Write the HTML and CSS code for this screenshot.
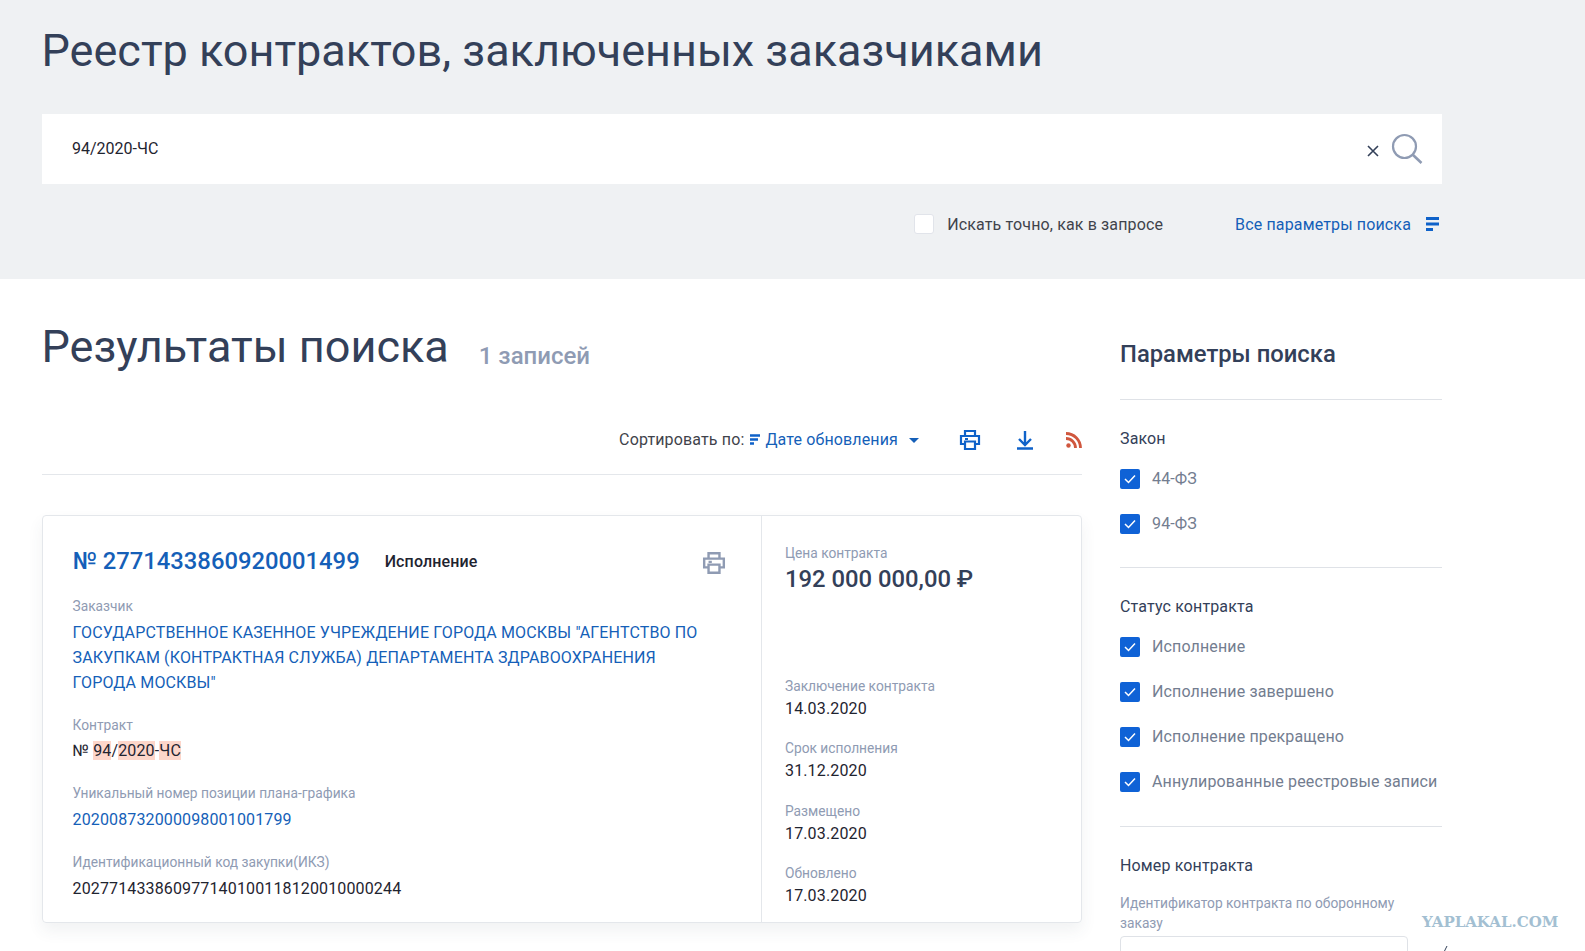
FILE: index.html
```html
<!DOCTYPE html>
<html lang="ru">
<head>
    <meta charset="UTF-8">
    <meta name="viewport" content="width=device-width, initial-scale=1.0">
    <title>Реестр контрактов</title>
    <link rel="stylesheet" href="styles.css">
</head>
<body>
    <!-- Search header -->
    <section class="hero">
        <h1 class="hero-title">Реестр контрактов, заключенных заказчиками</h1>
        <div class="search-box">
            <span class="search-value">94/2020-ЧС</span>
            <svg class="icon-clear" width="14" height="14" viewBox="0 0 14 14"><path d="M2 2l10 10M12 2L2 12" stroke="#334059" stroke-width="1.6" fill="none"/></svg>
            <svg class="icon-search" width="32" height="32" viewBox="0 0 32 32"><circle cx="13.5" cy="13.5" r="11.5" stroke="#8f9bb3" stroke-width="2.2" fill="none"/><path d="M21.8 21.8l8.7 8.2" stroke="#8f9bb3" stroke-width="2.6" fill="none"/></svg>
        </div>
        <div class="search-options">
            <span class="check-empty"></span>
            <span class="exact-label">Искать точно, как в запросе</span>
            <a class="all-params">Все параметры поиска</a>
            <svg width="13" height="14" viewBox="0 0 13 14"><path d="M0 1.500h13M0 7h13M0 12.500h7" stroke="#0f62c9" stroke-width="2.800" fill="none"/></svg>
        </div>
    </section>

    <div class="content">
        <main class="results">
            <div class="results-head">
                <h2 class="results-title">Результаты поиска</h2>
                <span class="results-count">1 записей</span>
            </div>

            <div class="toolbar">
                <span class="sort-label">Сортировать по:</span>
                <svg class="icon-sort" width="10" height="11" viewBox="0 0 10 11"><path d="M0 1.500h10M0 5.500h8M0 9.500h4" stroke="#0f62c9" stroke-width="2.600" fill="none"/></svg>
                <a class="sort-value">Дате обновления</a>
                <span class="caret"></span>
                <svg class="tool-print" width="22" height="22" viewBox="0 0 22 22"><path d="M6 6V2h10v4M6 15H2V7h18v8h-4M6 12.500h10V20H6zM6 10h3" stroke="#0f62c9" stroke-width="2.200" fill="none"/></svg>
                <svg class="tool-load" width="18" height="20" viewBox="0 0 18 20"><path d="M9 1v13M3 9l6 6 6-6M1 18.500h16" stroke="#0f62c9" stroke-width="2.400" fill="none"/></svg>
                <svg class="tool-rss" width="16" height="16" viewBox="0 0 16 16"><circle cx="2.500" cy="13.500" r="2.200" fill="#d0573e"/><path d="M0 6.500a9.500 9.500 0 0 1 9.500 9.500M0 1.500a14.500 14.500 0 0 1 14.500 14.500" stroke="#d0573e" stroke-width="2.800" fill="none"/></svg>
            </div>

            <article class="card">
                <div class="card-main">
                    <div class="card-top">
                        <a class="card-number">№ 2771433860920001499</a>
                        <span class="card-status">Исполнение</span>
                        <svg class="card-print" width="24" height="24" viewBox="0 0 22 22"><path d="M6 6V2h10v4M6 15H2V7h18v8h-4M6 12.500h10V20H6zM6 10h3" stroke="#8f9bb3" stroke-width="2.200" fill="none"/></svg>
                    </div>
                    <div class="field field-first">
                        <div class="field-label">Заказчик</div>
                        <a class="field-link">ГОСУДАРСТВЕННОЕ КАЗЕННОЕ УЧРЕЖДЕНИЕ ГОРОДА МОСКВЫ "АГЕНТСТВО ПО ЗАКУПКАМ (КОНТРАКТНАЯ СЛУЖБА) ДЕПАРТАМЕНТА ЗДРАВООХРАНЕНИЯ ГОРОДА МОСКВЫ"</a>
                    </div>
                    <div class="field">
                        <div class="field-label">Контракт</div>
                        <div class="field-value">№ <mark>94</mark>/<mark>2020</mark>-<mark>ЧС</mark></div>
                    </div>
                    <div class="field">
                        <div class="field-label">Уникальный номер позиции плана-графика</div>
                        <a class="field-link">202008732000098001001799</a>
                    </div>
                    <div class="field">
                        <div class="field-label">Идентификационный код закупки(ИКЗ)</div>
                        <div class="field-value field-value-last">202771433860977140100118120010000244</div>
                    </div>
                </div>
                <div class="card-side">
                    <div class="price-block">
                        <div class="field-label">Цена контракта</div>
                        <div class="price">192 000 000,00 ₽</div>
                    </div>
                    <div class="date-list">
                        <div class="date-item">
                            <div class="field-label">Заключение контракта</div>
                            <div class="date-value">14.03.2020</div>
                        </div>
                        <div class="date-item">
                            <div class="field-label">Срок исполнения</div>
                            <div class="date-value">31.12.2020</div>
                        </div>
                        <div class="date-item">
                            <div class="field-label">Размещено</div>
                            <div class="date-value">17.03.2020</div>
                        </div>
                        <div class="date-item">
                            <div class="field-label">Обновлено</div>
                            <div class="date-value">17.03.2020</div>
                        </div>
                    </div>
                </div>
            </article>
        </main>

        <aside class="sidebar">
            <h3 class="sidebar-title">Параметры поиска</h3>

            <div class="filter-group">
                <div class="filter-name">Закон</div>
                <div class="check-row"><span class="check-on"><svg width="14" height="12" viewBox="0 0 14 12"><path d="M2 6l3.500 3.500L12 2.500" stroke="#fff" stroke-width="1.500" fill="none"/></svg></span>44-ФЗ</div>
                <div class="check-row"><span class="check-on"><svg width="14" height="12" viewBox="0 0 14 12"><path d="M2 6l3.500 3.500L12 2.500" stroke="#fff" stroke-width="1.500" fill="none"/></svg></span>94-ФЗ</div>
            </div>

            <div class="filter-group filter-status">
                <div class="filter-name">Статус контракта</div>
                <div class="check-row"><span class="check-on"><svg width="14" height="12" viewBox="0 0 14 12"><path d="M2 6l3.500 3.500L12 2.500" stroke="#fff" stroke-width="1.500" fill="none"/></svg></span>Исполнение</div>
                <div class="check-row"><span class="check-on"><svg width="14" height="12" viewBox="0 0 14 12"><path d="M2 6l3.500 3.500L12 2.500" stroke="#fff" stroke-width="1.500" fill="none"/></svg></span>Исполнение завершено</div>
                <div class="check-row"><span class="check-on"><svg width="14" height="12" viewBox="0 0 14 12"><path d="M2 6l3.500 3.500L12 2.500" stroke="#fff" stroke-width="1.500" fill="none"/></svg></span>Исполнение прекращено</div>
                <div class="check-row"><span class="check-on"><svg width="14" height="12" viewBox="0 0 14 12"><path d="M2 6l3.500 3.500L12 2.500" stroke="#fff" stroke-width="1.500" fill="none"/></svg></span>Аннулированные реестровые записи</div>
            </div>

            <div class="filter-group filter-last">
                <div class="filter-name">Номер контракта</div>
                <div class="filter-hint">Идентификатор контракта по оборонному заказу</div>
                <div class="filter-input"></div>
            </div>
        </aside>
    </div>

    <div class="watermark">YAPLAKAL.COM</div>
    <svg class="cut-mark" width="5" height="6" viewBox="0 0 5 6"><path d="M4 0L1 6" stroke="#334059" stroke-width="1" fill="none"/></svg>
</body>
</html>
```

FILE: styles.css
```css
html, body {
    height: 951px;
    overflow: hidden;
}

body {
    margin: 0;
    font-family: Roboto, "Liberation Sans", sans-serif;
    font-size: 16px;
    letter-spacing: 0.14px;
    color: #334059;
    background-color: #fff;
    position: relative;
}

a {
    color: #155fb8;
}

/* Search header */
.hero {
    height: 279px;
    box-sizing: border-box;
    padding: 19px 143px 0 42px;
    background-color: #eff1f3;
}

.hero-title {
    margin: 0 0 0 -0.5px;
    font-size: 45px;
    font-weight: 400;
    line-height: 64px;
    letter-spacing: 0;
}

.search-box {
    display: flex;
    align-items: center;
    height: 70px;
    margin-top: 31px;
    padding: 0 19px 0 30px;
    background-color: #fff;
}

.search-value {
    flex: 1;
    margin-bottom: 2px;
    color: #1f2430;
    letter-spacing: 0;
}

.icon-clear {
    margin-right: 11px;
    margin-top: 3px;
}

.search-options {
    display: flex;
    align-items: center;
    justify-content: flex-end;
    margin-top: 30px;
    padding-right: 3px;
}

.check-empty {
    width: 18px;
    height: 18px;
    border: 1px solid #e1e4ea;
    border-radius: 3px;
    background-color: #fff;
    margin-right: 13px;
}

.exact-label {
    color: #3f434b;
    margin-right: 72px;
}

.all-params {
    margin-right: 15px;
}

/* Layout */
.content {
    display: flex;
    padding: 0 143px 0 42px;
}

.results {
    width: 1040px;
    margin-right: 38px;
}

.results-head {
    display: flex;
    align-items: flex-start;
    padding-top: 38px;
}

.results-title {
    margin: 0 30px 0 -0.5px;
    font-size: 45px;
    font-weight: 400;
    line-height: 60px;
    letter-spacing: 0;
}

.results-count {
    margin-top: 25px;
    font-size: 24px;
    font-weight: 500;
    line-height: 28px;
    letter-spacing: 0;
    color: #8f9bb3;
}

.toolbar {
    display: flex;
    align-items: center;
    justify-content: flex-end;
    height: 69px;
    margin-top: 28px;
    border-bottom: 1px solid #e4e7eb;
}

.sort-label {
    color: #3f434b;
    margin-right: 6px;
}

.sort-value {
    margin-left: 5px;
}

.caret {
    width: 0;
    height: 0;
    margin: 2px 0 0 11px;
    border-left: 5px solid transparent;
    border-right: 5px solid transparent;
    border-top: 5px solid #155fb8;
}

.tool-print {
    margin-left: 40px;
}

.tool-load {
    margin-left: 35px;
}

.tool-rss {
    margin-left: 32px;
}

/* Contract card */
.card {
    display: flex;
    height: 408px;
    box-sizing: border-box;
    margin-top: 40px;
    border: 1px solid #e4e7eb;
    border-radius: 4px;
    box-shadow: 0 8px 16px rgba(60, 70, 90, 0.07);
}

.card-main {
    width: 719px;
    box-sizing: border-box;
    padding: 30px 45px 0 29.5px;
    border-right: 1px solid #e4e7eb;
}

.card-top {
    display: flex;
    align-items: center;
    height: 30px;
    margin-right: -15px;
}

.card-number {
    font-size: 23.8px;
    font-weight: 500;
    letter-spacing: 0;
    margin-right: 25px;
}

.card-status {
    font-weight: 500;
    color: #1f2430;
    flex: 1;
}

.card-print {
    margin-right: 5px;
    margin-top: 4px;
}

.field {
    margin-top: 20px;
}

.field-first {
    margin-top: 20px;
}

.field-label {
    font-size: 13.75px;
    line-height: 20px;
    letter-spacing: 0;
    color: #8f9bb3;
}

.field-value {
    margin-top: 3px;
    line-height: 25px;
    color: #1f2430;
}

.field-value-last {
    margin-top: 4px;
}

.date-value {
    line-height: 25px;
    color: #1f2430;
}

.field-link {
    display: block;
    line-height: 25px;
    margin-top: 4px;
}

mark {
    color: inherit;
    background-color: #fdd6ca;
}

.card-side {
    flex: 1;
    padding: 27px 20px 0 23px;
}

.price {
    font-size: 23.8px;
    font-weight: 500;
    line-height: 32px;
    letter-spacing: 0;
}

.date-list {
    margin-top: 81px;
}

.date-item {
    margin-bottom: 17.4px;
}

/* Sidebar */
.sidebar {
    width: 322px;
}

.sidebar-title {
    margin: 0;
    padding: 60px 0 30px;
    font-size: 23.8px;
    font-weight: 500;
    line-height: 30px;
    letter-spacing: 0;
    border-bottom: 1px solid #dfe2e7;
}

.filter-group {
    padding: 27px 0 21px;
    border-bottom: 1px solid #dfe2e7;
}

.filter-status {
    padding-bottom: 22px;
}

.filter-last {
    border-bottom: 0;
}

.filter-name {
    line-height: 24px;
    margin-bottom: 5px;
}

.check-row {
    display: flex;
    align-items: center;
    height: 45px;
    color: #737d90;
}

.check-on {
    display: flex;
    align-items: center;
    justify-content: center;
    width: 20px;
    height: 20px;
    margin-right: 12px;
    border-radius: 2px;
    background-color: #0f62d6;
}

.filter-hint {
    max-width: 288px;
    font-size: 13.75px;
    line-height: 20px;
    letter-spacing: 0;
    color: #8f9bb3;
    margin-top: 15px;
}

.filter-input {
    width: 288px;
    height: 40px;
    margin-top: 3px;
    border: 1px solid #dfe2e7;
    border-radius: 4px;
    box-sizing: border-box;
}

/* Watermark and clipped mark sit over the page */
.watermark {
    position: absolute;
    left: 1422px;
    top: 913px;
    font-family: "DejaVu Serif", serif;
    font-size: 15px;
    font-weight: 700;
    letter-spacing: 0;
    color: #a3bfd2;
}

.cut-mark {
    position: absolute;
    left: 1443px;
    top: 946px;
}
```
